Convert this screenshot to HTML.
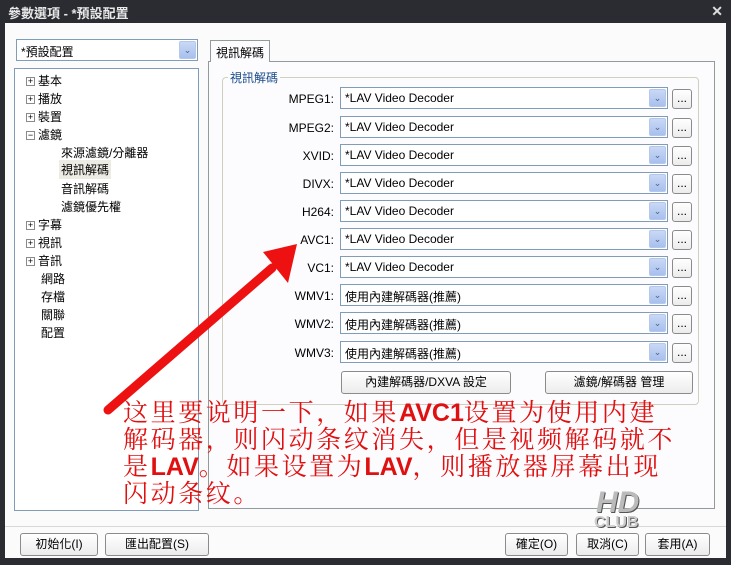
<!DOCTYPE html>
<html><head><meta charset="utf-8"><style>
*{margin:0;padding:0;box-sizing:border-box}
body{width:731px;height:565px;background:#2a2c32;position:relative;overflow:hidden;font-family:"Liberation Sans","Noto Sans CJK TC",sans-serif;font-size:12px;color:#000}
.a{position:absolute}
.title{left:8px;top:3px;color:#e8e8e8;font-size:13px;font-weight:bold}
.win{left:5px;top:23px;width:721px;height:535px;background:#fbfbfb}
.combo{position:absolute;background:#fff;border:1px solid #7f9db9;height:22px;padding:3px 4px;font-size:12px}
.dd{position:absolute;right:1px;top:1px;width:17px;height:18px;background:linear-gradient(#c9d8f5,#a8c0ee);border:1px solid #b5c8ec;border-radius:2px;color:#4d6185;font-size:9px;text-align:center;line-height:17px}
.btn{position:absolute;border:1px solid #8b8b8b;border-radius:3px;background:linear-gradient(#fff,#ececec);text-align:center;font-size:12px;line-height:20px;height:23px}
.tree div{position:absolute;font-size:12px}
.pm{display:inline-block;width:9px;height:9px;border:1px solid #8a8a8a;font-size:9px;line-height:7px;text-align:center;margin-right:3px;vertical-align:1px;background:#fff}
.lbl{position:absolute;text-align:right;width:80px;left:254px;font-size:12px}
.red{left:123px;color:#e01010;font-size:25px;letter-spacing:2.6px;line-height:27px;font-family:"Liberation Serif","Noto Serif CJK SC",serif;top:400px;width:600px;white-space:nowrap}
.red b{font-family:"Liberation Sans",sans-serif;letter-spacing:0}
</style></head><body>
<div class="a title">參數選項 - *預設配置</div>
<div class="a" style="right:8px;top:3px;color:#ddd;font-size:14px;font-weight:bold">✕</div>
<div class="a win"></div>
<div class="combo" style="left:16px;top:39px;width:182px">*預設配置<div class="dd">⌄</div></div>
<div class="a" style="left:14px;top:68px;width:185px;height:443px;border:1px solid #7f9db9;background:#fff"></div>
<div class="tree">
<div style="left:26px;top:72px"><span class="pm">+</span>基本</div>
<div style="left:26px;top:90px"><span class="pm">+</span>播放</div>
<div style="left:26px;top:108px"><span class="pm">+</span>裝置</div>
<div style="left:26px;top:126px"><span class="pm">−</span>濾鏡</div>
<div style="left:61px;top:144px">來源濾鏡/分離器</div>
<div style="left:59px;top:160px;background:#ecebe4;padding:1px 2px">視訊解碼</div>
<div style="left:61px;top:180px">音訊解碼</div>
<div style="left:61px;top:198px">濾鏡優先權</div>
<div style="left:26px;top:216px"><span class="pm">+</span>字幕</div>
<div style="left:26px;top:234px"><span class="pm">+</span>視訊</div>
<div style="left:26px;top:252px"><span class="pm">+</span>音訊</div>
<div style="left:41px;top:270px">網路</div>
<div style="left:41px;top:288px">存檔</div>
<div style="left:41px;top:306px">關聯</div>
<div style="left:41px;top:324px">配置</div>
</div>
<div class="a" style="left:208px;top:61px;width:507px;height:448px;border:1px solid #919b9c;background:#fcfcfe"></div>
<div class="a" style="left:210px;top:40px;width:60px;height:22px;border:1px solid #919b9c;border-bottom:none;background:#fcfcfe;padding:3px 5px">視訊解碼</div>
<div class="a" style="left:222px;top:77px;width:477px;height:328px;border:1px solid #d0d0bf;border-radius:4px"></div>
<div class="a" style="left:228px;top:69px;background:#fcfcfe;color:#1a4a8a;padding:0 2px">視訊解碼</div>
<div class="lbl" style="top:92px">MPEG1:</div><div class="combo" style="left:340px;top:87px;width:328px">*LAV Video Decoder<div class="dd">⌄</div></div><div class="btn" style="left:672px;top:89px;width:20px;height:20px;line-height:16px">...</div>
<div class="lbl" style="top:121px">MPEG2:</div><div class="combo" style="left:340px;top:116px;width:328px">*LAV Video Decoder<div class="dd">⌄</div></div><div class="btn" style="left:672px;top:118px;width:20px;height:20px;line-height:16px">...</div>
<div class="lbl" style="top:149px">XVID:</div><div class="combo" style="left:340px;top:144px;width:328px">*LAV Video Decoder<div class="dd">⌄</div></div><div class="btn" style="left:672px;top:146px;width:20px;height:20px;line-height:16px">...</div>
<div class="lbl" style="top:177px">DIVX:</div><div class="combo" style="left:340px;top:172px;width:328px">*LAV Video Decoder<div class="dd">⌄</div></div><div class="btn" style="left:672px;top:174px;width:20px;height:20px;line-height:16px">...</div>
<div class="lbl" style="top:205px">H264:</div><div class="combo" style="left:340px;top:200px;width:328px">*LAV Video Decoder<div class="dd">⌄</div></div><div class="btn" style="left:672px;top:202px;width:20px;height:20px;line-height:16px">...</div>
<div class="lbl" style="top:233px">AVC1:</div><div class="combo" style="left:340px;top:228px;width:328px">*LAV Video Decoder<div class="dd">⌄</div></div><div class="btn" style="left:672px;top:230px;width:20px;height:20px;line-height:16px">...</div>
<div class="lbl" style="top:261px">VC1:</div><div class="combo" style="left:340px;top:256px;width:328px">*LAV Video Decoder<div class="dd">⌄</div></div><div class="btn" style="left:672px;top:258px;width:20px;height:20px;line-height:16px">...</div>
<div class="lbl" style="top:289px">WMV1:</div><div class="combo" style="left:340px;top:284px;width:328px">使用內建解碼器(推薦)<div class="dd">⌄</div></div><div class="btn" style="left:672px;top:286px;width:20px;height:20px;line-height:16px">...</div>
<div class="lbl" style="top:317px">WMV2:</div><div class="combo" style="left:340px;top:312px;width:328px">使用內建解碼器(推薦)<div class="dd">⌄</div></div><div class="btn" style="left:672px;top:314px;width:20px;height:20px;line-height:16px">...</div>
<div class="lbl" style="top:346px">WMV3:</div><div class="combo" style="left:340px;top:341px;width:328px">使用內建解碼器(推薦)<div class="dd">⌄</div></div><div class="btn" style="left:672px;top:343px;width:20px;height:20px;line-height:16px">...</div>
<div class="btn" style="left:341px;top:371px;width:170px">內建解碼器/DXVA 設定</div>
<div class="btn" style="left:545px;top:371px;width:148px">濾鏡/解碼器 管理</div>
<div class="a" style="left:5px;top:526px;width:721px;border-top:1px solid #d8d8d8"></div>
<div class="btn" style="left:20px;top:533px;width:78px">初始化(I)</div>
<div class="btn" style="left:105px;top:533px;width:104px">匯出配置(S)</div>
<div class="btn" style="left:505px;top:533px;width:63px">確定(O)</div>
<div class="btn" style="left:576px;top:533px;width:63px">取消(C)</div>
<div class="btn" style="left:645px;top:533px;width:65px">套用(A)</div>
<svg class="a" style="left:0;top:0" width="731" height="565">
<line x1="108" y1="410" x2="272" y2="268" stroke="#ee1111" stroke-width="9" stroke-linecap="round"/>
<polygon points="297,244 263,252 288,283" fill="#ee1111"/>
</svg>
<div class="a red">这里要说明一下，如果<b>AVC1</b>设置为使用内建<br>解码器，则闪动条纹消失，但是视频解码就不<br>是<b>LAV</b>。如果设置为<b>LAV</b>，则播放器屏幕出现<br>闪动条纹。</div>
<div class="a" style="left:596px;top:486px;color:#bbb;font-size:30px;font-weight:bold;font-style:italic;text-shadow:1px 1px 0 #555">HD</div>
<div class="a" style="left:594px;top:514px;color:#ccc;font-size:16px;font-weight:bold;text-shadow:1px 1px 0 #555">CLUB</div>
</body></html>
